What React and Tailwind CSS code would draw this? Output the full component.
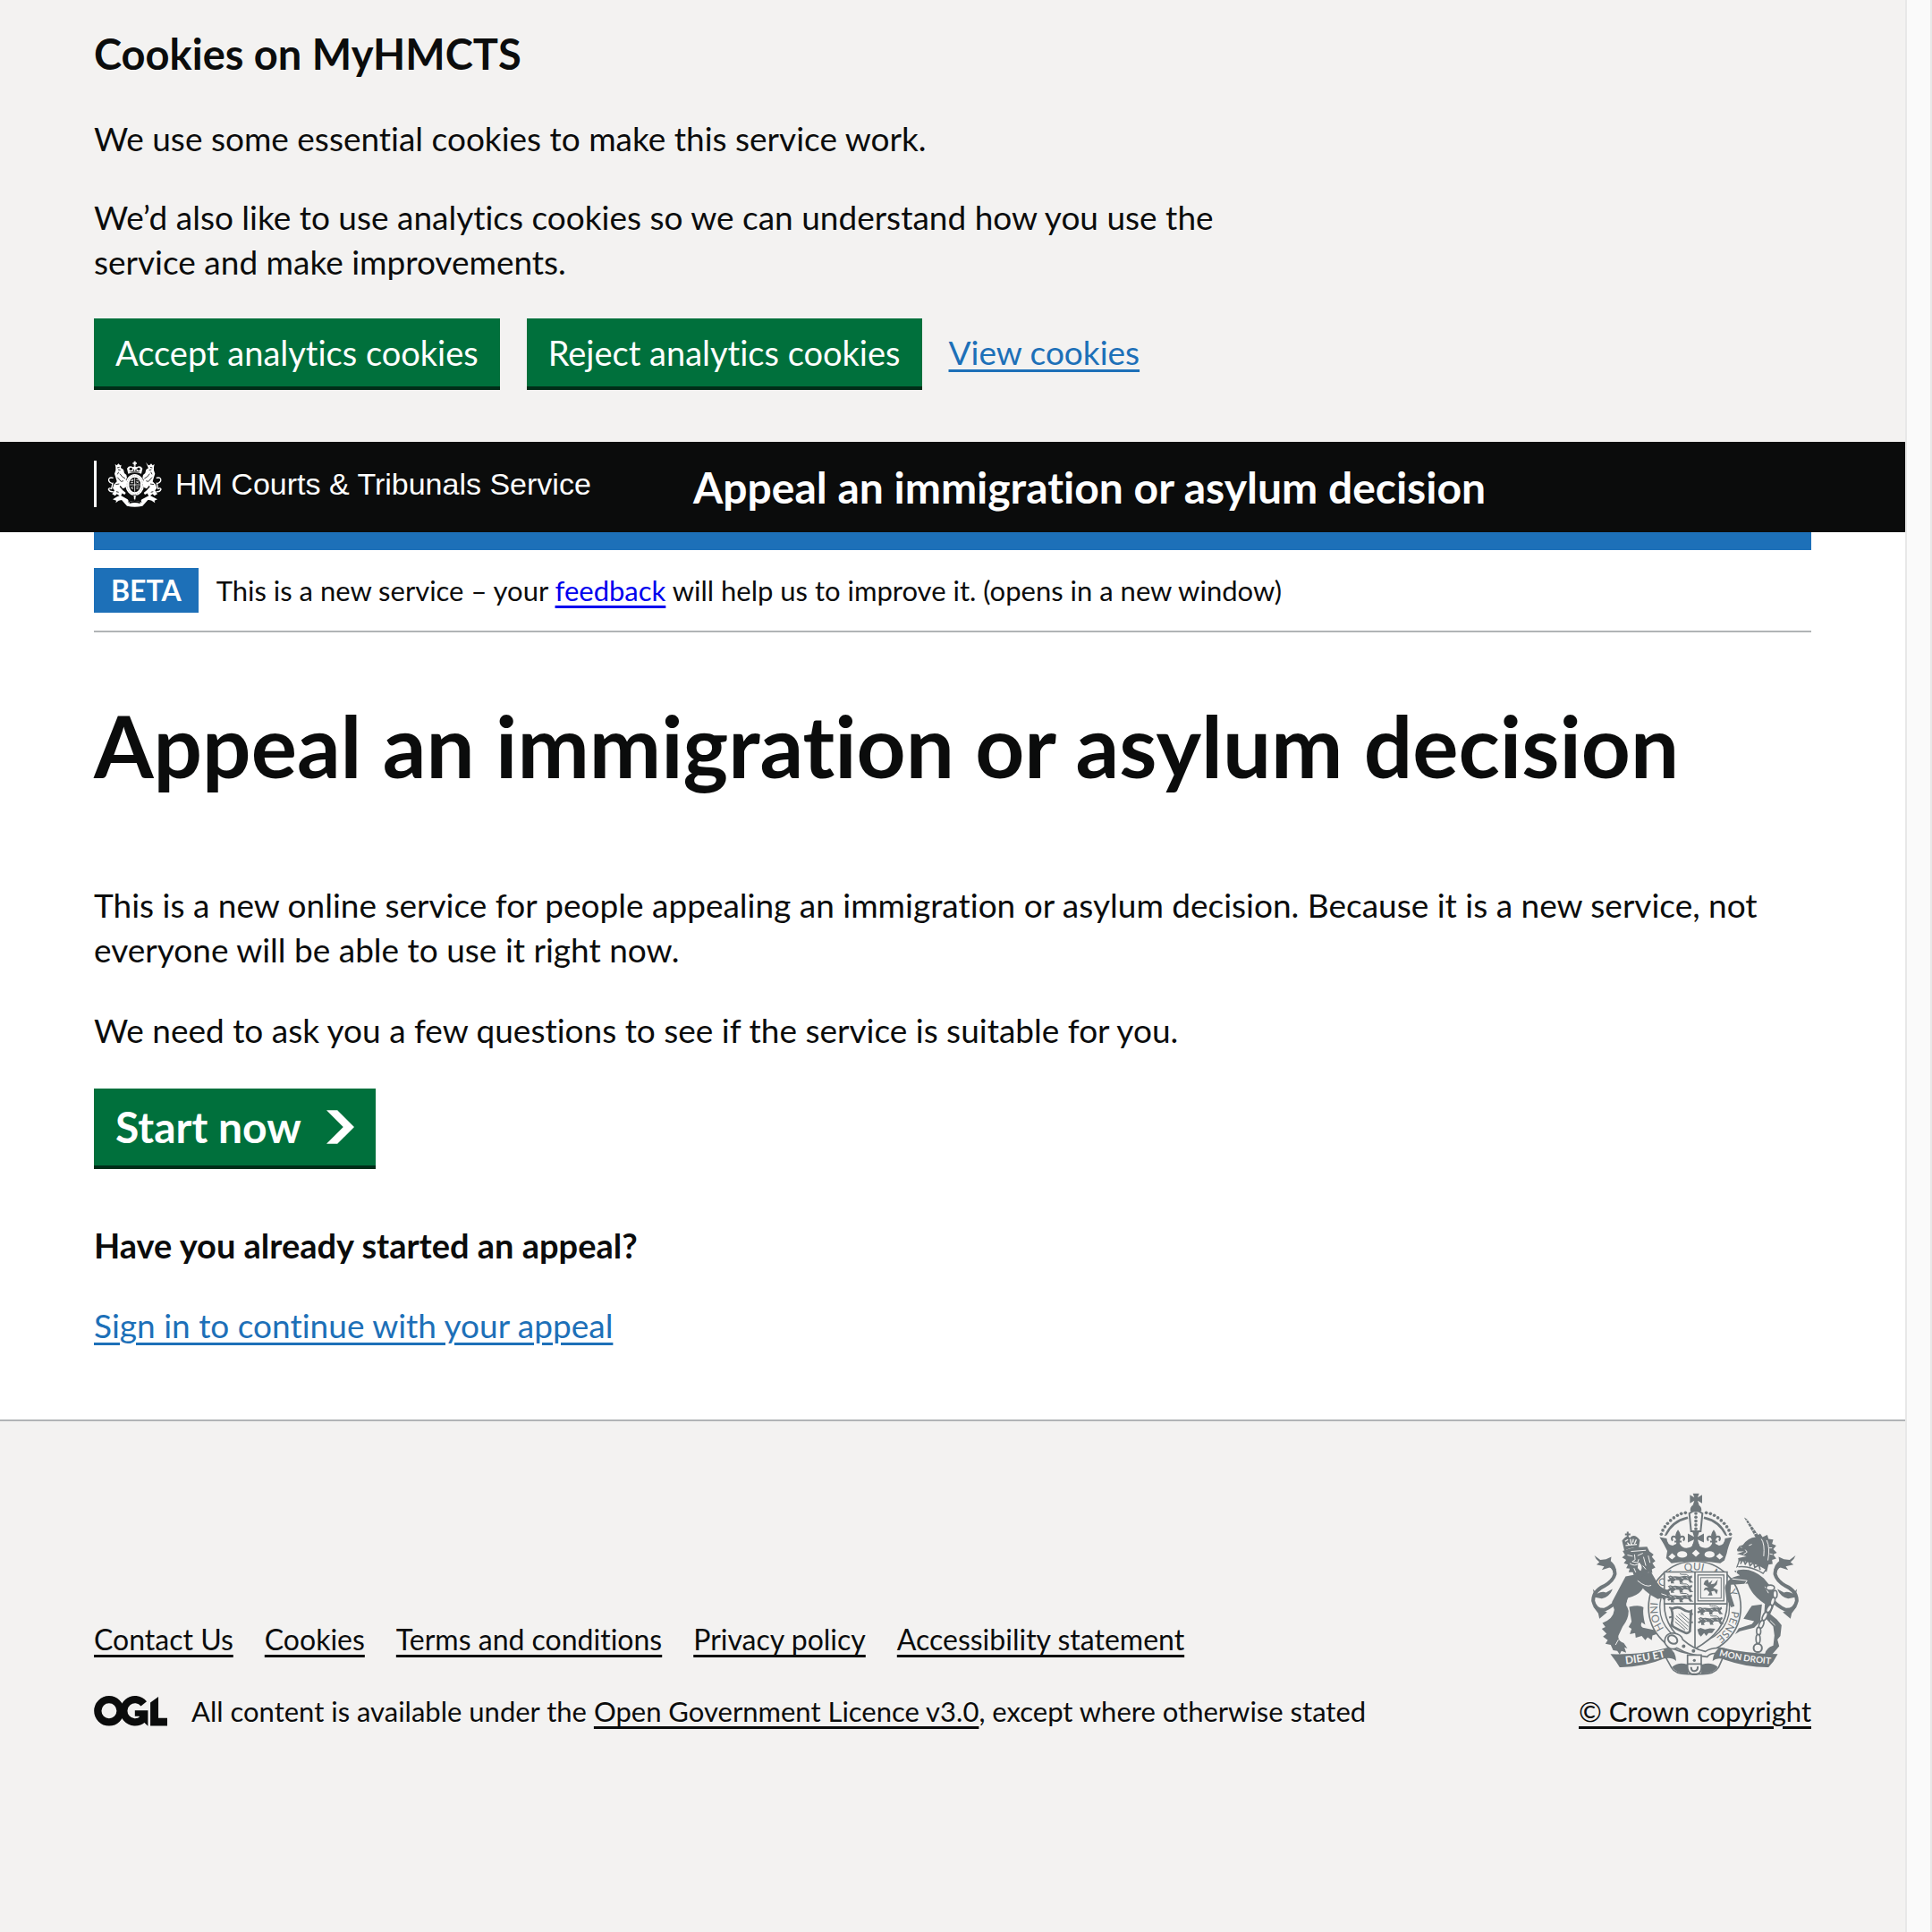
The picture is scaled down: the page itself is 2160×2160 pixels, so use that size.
const LINK = "underline underline-offset-[5px] decoration-[3px]";

function Button({ children }) {
  return (
    <button
      type="button"
      className="h-[76px] bg-[#00703c] px-6 text-[38px] leading-[38px] text-white shadow-[0_4px_0_#002d18]"
    >
      {children}
    </button>
  );
}

function HeaderCrest() {
  const beast = (
    <g>
      <path d="M86 40L92 44L97 38L103 44L107 42L105 52L114 58L117 70L124 76L126 86L122 92L127 108L121 118L112 122L104 112L98 118L104 132L110 138L104 148L92 140L86 146L76 140L84 128L78 120L82 108L92 98L88 84L84 72L88 60L88 50Z" />
      <path d="M80 86Q62 82 65 96Q70 106 78 104L74 122Q66 118 64 124Q68 134 80 132" fill="none" stroke="#fff" strokeWidth="4" />
      <path d="M88 118L98 112L112 128L122 136L118 142L106 136Z" />
      <g stroke="#0b0c0c" strokeWidth="2.5" fill="none">
        <path d="M93 52L101 50M96 58L104 60M102 72L110 82L120 88M94 84L106 98L114 96M88 108L100 106M98 66L94 74M90 132L98 134" />
      </g>
    </g>
  );
  return (
    <svg viewBox="60 28 186 156" className="h-[52px] w-[62px]" fill="#fff" aria-hidden="true">
      {beast}
      <g transform="matrix(-1 0 0 1 304 0)">{beast}</g>
      <path d="M189 33L204 52L199 56Z" />
      <path d="M149 30H155V35H159V39H155V45H149V39H145V35H149Z" />
      <path d="M130 72L126 54Q134 42 146 50L152 46L158 50Q170 42 178 54L174 72Q152 64 130 72Z" />
      <g fill="#0b0c0c">
        <circle cx="139" cy="56" r="5" />
        <circle cx="165" cy="56" r="5" />
        <path d="M147 55L151 62L146 64ZM157 55L153 62L158 64Z" />
        <path d="M134 66Q152 60 170 66V68Q152 63 134 68Z" />
      </g>
      <ellipse cx="152" cy="109" rx="31" ry="36" />
      <ellipse cx="152" cy="109" rx="19" ry="25" fill="#0b0c0c" />
      <path d="M152 86V132M134 109H170M138 96H147M138 102H147M157 98L166 104M157 104L165 96M138 116L147 124M141 122L147 114M157 116H166M157 122H164M157 92H165M141 92H148" stroke="#fff" strokeWidth="2.5" />
      <ellipse cx="152" cy="109" rx="26" ry="31" fill="none" stroke="#0b0c0c" strokeWidth="1.5" strokeDasharray="2 5" />
      <path d="M78 158Q92 148 104 144L128 158Q134 164 128 168Q150 160 176 168Q170 162 176 158L202 144Q214 150 228 158L218 162L220 170Q206 158 196 160L178 180Q152 186 126 180L108 160Q98 160 88 170L90 162Z" />
      <path d="M134 166Q152 160 170 166V172Q152 166 134 172Z" fill="#0b0c0c" />
      <path d="M147 144H157L155 156L152 162L149 156Z" stroke="#0b0c0c" strokeWidth="2" />
    </svg>
  );
}

const BEADS = [
  [433, 122], [419, 125], [406, 131], [394, 139], [383, 148], [373, 158], [364, 169], [357, 181], [352, 194],
];

function HalfCrown() {
  return (
    <g>
      {BEADS.map(([x, y]) => (
        <circle key={x} cx={x} cy={y} r="5.5" />
      ))}
      <path d="M440 135Q384 146 362 200L370 198Q392 154 442 142Z" />
      <path d="M408 179Q423 198 413 213L414 229H402L403 213Q393 198 408 179Z" />
      <path d="M405 216Q402 198 390 202Q384 208 390 216M411 216Q414 198 426 202Q432 208 426 216M396 219H420" fill="none" stroke="#6f777b" strokeWidth="6" />
    </g>
  );
}

function WalkingLion({ x, y }) {
  return (
    <g transform={`translate(${x} ${y})`}>
      <path d="M2 5L10 1L18 4L26 3L42 5L58 2L74 4L82 0L84 6L78 12L82 20L88 24L76 25L70 16L56 15L50 21L54 26L42 26L40 17L28 16L20 22L24 27L12 27L12 19L4 22L0 17L8 12Z" />
      <path d="M74 4Q64 -6 54 -3Q48 -2 42 -5" fill="none" stroke="#6f777b" strokeWidth="3" />
      <path d="M8 6L14 8M22 8L30 12M46 8L54 11M64 7L70 11" stroke="#f3f2f1" strokeWidth="2" />
    </g>
  );
}

function Tail() {
  return (
    <g>
      <path d="M156 292Q196 296 196 328Q190 352 160 368Q122 386 123 418Q130 450 160 448Q190 436 218 402" fill="none" stroke="#6f777b" strokeWidth="12" />
      <path d="M127 265L147 280L166 278L184 270L182 284Q196 294 201 316L178 306L152 314L160 302L134 296L144 288Q132 280 127 265Z" />
      <path d="M122 378L136 394Q154 384 166 390L188 378Q180 404 152 410L128 406Z" />
      <path d="M122 436L146 448L170 456L144 478L140 460Z" />
    </g>
  );
}

function RoyalArms() {
  const bg = "#f3f2f1";
  const ink = "#6f777b";
  return (
    <svg viewBox="117 55 696 613" className="h-[204px] w-[232px]" fill={ink} aria-hidden="true">
      <defs>
        <path id="garter" d="M365 516A125 125 0 1 1 480 564" />
        <path id="mottoLeft" d="M232 630Q310 622 374 604" />
        <path id="mottoRight" d="M546 602Q620 622 716 630" />
      </defs>

      <path d="M458 57H479L474 71L489 62V90L474 81L479 96H458L463 81L448 90V62L463 71Z" />
      <path d="M468 92Q488 98 487 114L480 122H456L449 114Q448 98 468 92Z" />
      <path d="M446 124Q468 106 490 124L484 184H452Z" fill={bg} stroke={ink} strokeWidth="6" />
      {[124, 137, 150, 163, 176].map((y) => (
        <circle key={y} cx="468" cy={y} r="5.5" />
      ))}
      <HalfCrown />
      <g transform="matrix(-1 0 0 1 936 0)">
        <HalfCrown />
      </g>
      <path d="M456 184H480L474 203L495 192V222L474 212L480 234H456L462 212L441 222V192L462 203Z" />

      <Tail />
      <g transform="matrix(-1 0 0 1 930 0)">
        <Tail />
      </g>

      <circle cx="464" cy="440" r="155" fill={bg} stroke={ink} strokeWidth="5" />
      <circle cx="464" cy="440" r="117" fill="none" stroke={ink} strokeWidth="4" />
      <g fontFamily="Lato, sans-serif" fontSize="35" fontWeight="400">
        <text><textPath href="#garter" startOffset="6">HONI</textPath></text>
        <text><textPath href="#garter" startOffset="132">SOIT</textPath></text>
        <text><textPath href="#garter" startOffset="244">QUI</textPath></text>
        <text><textPath href="#garter" startOffset="336">MAL Y</textPath></text>
        <text><textPath href="#garter" startOffset="486">PENSE</textPath></text>
      </g>
      <path d="M346 204L370 208Q372 230 390 232L402 226H414Q422 242 440 240Q456 238 458 226H478Q480 238 496 240Q514 242 522 226H534L546 232Q564 230 566 208L590 204Q576 236 572 258L564 282L550 292Q468 276 386 292L368 274L372 250Q360 226 346 204Z" />
      <g fill={bg}>
        <ellipse cx="422" cy="262" rx="17" ry="11" />
        <ellipse cx="514" cy="262" rx="17" ry="11" />
        <path d="M468 246L481 258L468 270L455 258ZM388 258L400 268L388 279L376 270ZM548 258L560 270L548 279L536 268Z" />
      </g>

      <path d="M362 321H573V430Q572 520 464 580Q362 520 362 430Z" fill={bg} stroke={ink} strokeWidth="5" />
      <path d="M465 321V580M362 428H573" stroke={ink} strokeWidth="5" />
      <WalkingLion x={372} y={332} />
      <WalkingLion x={372} y={364} />
      <WalkingLion x={372} y={396} />
      <WalkingLion x={472} y={438} />
      <WalkingLion x={474} y={472} />
      <g transform="translate(470 508) scale(.75 1)">
        <path d="M4 6L18 1L38 6L60 2L84 4L70 18L54 18L44 28L34 18L20 30L10 22Z" />
      </g>
      <rect x="475" y="331" width="87" height="87" fill="none" stroke={ink} strokeWidth="4" />
      <rect x="484" y="340" width="69" height="69" fill="none" stroke={ink} strokeWidth="3" />
      <path d="M498 352L508 346L512 358L524 348L518 362L530 360L542 346L538 364L526 374L542 382L538 396L530 384L520 386L524 400L508 400L514 390L504 380L494 384L498 374L510 372L494 362Z" />
      <g fill="none" stroke={ink}>
        <path d="M386 446Q408 434 424 446T452 452L448 520Q440 530 430 524Q400 512 386 500Q394 470 386 446Z" strokeWidth="8" />
        <path d="M398 476L440 514M402 468L442 504M410 462L444 492M418 458L446 482M398 488L432 516" strokeWidth="3" />
        <path d="M392 444L378 440M392 470L378 474M392 496L380 504M446 462H458M446 490H458" strokeWidth="6" />
      </g>

      <path d="M364 560Q360 528 392 526Q420 530 424 548Q460 580 500 588Q528 570 568 580L552 598Q520 588 506 606Q446 602 404 576Q380 588 364 560Z" fill={bg} stroke={ink} strokeWidth="5" />
      <ellipse cx="390" cy="548" rx="17" ry="13" transform="rotate(35 390 548)" fill="none" stroke={ink} strokeWidth="6" />
      <circle cx="427" cy="570" r="6" />
      <circle cx="460" cy="586" r="6" />
      <path d="M440 600H486V630H440Z" fill={bg} stroke={ink} strokeWidth="5" />
      <circle cx="463" cy="618" r="5" />

      <path d="M366 606L386 642Q398 664 440 664H490Q530 664 544 642L560 606" fill="none" stroke={ink} strokeWidth="5" />
      <path d="M388 640Q410 622 440 632L442 662Q404 664 388 640ZM542 640Q520 622 488 632L486 662Q526 664 542 640Z" />
      <path d="M440 630Q436 664 463 666Q492 664 486 630M452 640Q452 654 463 654Q476 652 474 638" fill="none" stroke={ink} strokeWidth="6" />
      <path d="M181 597Q290 600 376 574Q400 586 402 620Q386 606 362 612Q290 642 212 641L200 622Z" />
      <path d="M743 597Q640 596 550 574Q528 586 524 620Q540 606 566 616Q640 642 712 641L728 622Z" />
      <g fill={bg} fontFamily="Lato, sans-serif" fontWeight="700">
        <text fontSize="36">
          <textPath href="#mottoLeft">DIEU ET</textPath>
        </text>
        <text fontSize="30">
          <textPath href="#mottoRight">MON DROIT</textPath>
        </text>
      </g>

      <path d="M232 336L282 326L318 322L338 356Q352 378 376 382L382 396L376 400L382 412L368 408L362 418L354 408L340 412Q308 396 290 376Q276 400 240 408L234 428L242 452Q242 480 222 504L208 534Q204 552 226 560L238 578L228 574L234 592L218 586L212 598L204 586L190 584L182 566L164 562L172 550L156 538L168 528L152 512L164 506L154 492Q190 480 194 448L186 422Z" />
      <path d="M244 438Q280 430 292 440Q288 462 298 498L286 490Q280 504 290 508L330 516L336 530L322 534L320 550L306 540L298 550L286 536L266 542L264 526L246 530L252 512L242 506L252 488Z" />
      <path d="M222 250L240 244L262 238L304 236L312 252L326 262L320 270L332 284L322 292L332 306L320 312L322 324L308 322L302 336L290 330L284 346L272 334L262 338L256 322L242 322L246 310L234 308L240 296L226 292L234 280L220 272L230 264Z" />
      <g fill="none" stroke={bg} strokeWidth="3">
        <path d="M238 264L256 268M272 266L290 258M262 262L264 280L254 286L272 290L276 278M246 292Q262 304 280 292M292 270L300 300M308 266L314 290M250 252L300 248M300 312L290 300M266 322L260 308M240 414L236 436M272 350Q300 374 318 366M352 394L370 400M208 548L198 566" />
        <path d="M276 290Q290 300 282 316L274 308Z" fill={bg} />
      </g>
      <path d="M228 250L220 216Q236 194 246 206Q262 190 280 214L276 240Q250 236 228 250Z" />
      <path d="M236 186H242V192H248V198H242V206H236V198H230V192H236Z" />
      <path d="M230 218L240 212M248 210L252 232M268 212L262 226M232 232L270 228M238 222L244 230M258 210L256 222" stroke={bg} strokeWidth="4" />

      <path d="M630 138L640 144L680 200L668 204Z" />
      <path d="M634 150L642 146M641 160L649 156M648 171L657 167M656 183L665 178M663 194L672 190" stroke={bg} strokeWidth="3" />
      <path d="M606 246L614 234L626 230Q644 206 668 204L684 192L692 204L708 196L712 210L728 212L724 226L738 232L728 244L740 256L728 262L738 276L724 280L726 294L712 296L706 320L690 318Q640 296 612 290L610 274L638 268L606 260L630 252L608 252Z" />
      <path d="M646 232L656 228M688 210Q700 226 696 268M706 214Q718 240 710 282M628 262L640 254L634 246M618 236L622 240M724 240L714 240M726 262L716 260" fill="none" stroke={bg} strokeWidth="3" />
      <path d="M614 282Q660 282 704 312L694 326Q650 298 606 304Z" fill={bg} stroke={ink} strokeWidth="4" />
      <path d="M618 294L626 276L634 294L644 280L650 300L662 288L666 306L680 298L684 314" fill="none" stroke={ink} strokeWidth="5" />
      <path d="M596 318Q650 300 696 342L728 380Q738 410 728 440L718 462L740 480L756 500L752 536L742 548L748 570L726 596H700Q704 576 728 568L732 534L728 504L706 480L698 454L700 428Q656 400 642 360L586 364L584 392L598 436L586 440L570 408L566 374Q568 342 616 332Z" />
      <path d="M656 434L690 430L684 488L664 508L616 520L600 530L612 510L656 496L664 486L628 478L648 446Z" />
      <path d="M590 344L640 350L632 362M596 318L610 304L600 334M700 370L712 392M734 500L718 484" fill="none" stroke={bg} strokeWidth="3" />
      <g fill={bg} stroke={ink} strokeWidth="5">
        <ellipse cx="718" cy="374" rx="14" ry="9" />
        <ellipse cx="734" cy="396" rx="7" ry="13" />
        <ellipse cx="726" cy="420" rx="7" ry="14" transform="rotate(15 726 420)" />
        <ellipse cx="714" cy="444" rx="7" ry="14" transform="rotate(28 714 444)" />
        <ellipse cx="700" cy="470" rx="7" ry="15" transform="rotate(26 700 470)" />
        <ellipse cx="688" cy="497" rx="7" ry="14" transform="rotate(22 688 497)" />
        <ellipse cx="679" cy="520" rx="7" ry="13" />
        <ellipse cx="677" cy="546" rx="7" ry="15" />
      </g>
      <circle cx="676" cy="576" r="14" fill={bg} stroke={ink} strokeWidth="6" />
    </svg>
  );
}

function OglLogo() {
  return (
    <svg viewBox="14 24 247 101" className="h-[34px] w-[82px] shrink-0" fill="none" stroke="#0b0c0c" role="img" aria-label="OGL">
      <circle cx="65" cy="74" r="38" strokeWidth="25" />
      <path d="M182 50A38 38 0 1 0 178 102" strokeWidth="25" />
      <path d="M152 72H196V125L176 106L166 92H152Z" fill="#0b0c0c" stroke="none" />
      <path d="M204 46L231 26V98H261V124H204Z" fill="#0b0c0c" stroke="none" />
    </svg>
  );
}

const FOOTER_LINKS = ["Contact Us", "Cookies", "Terms and conditions", "Privacy policy", "Accessibility statement"];

function Container({ children, className = "" }) {
  return <div className={`mx-auto max-w-[1920px] ${className}`}>{children}</div>;
}

export default function App() {
  return (
    <div className="flex min-h-screen bg-[#f3f2f1] font-[Lato,sans-serif] text-[37px] leading-[50px] text-[#0b0c0c] [font-variant-ligatures:none]">
      <div className="flex min-w-0 flex-1 flex-col">
        <section aria-label="Cookies on MyHMCTS" className="px-8 pt-[30px] pb-[62px]">
          <Container>
            <div className="max-w-[1280px]">
              <h2 className="mb-10 text-[47px] leading-[60px] font-bold">Cookies on MyHMCTS</h2>
              <p className="mb-[38px]">We use some essential cookies to make this service work.</p>
              <p className="mb-[38px]">
                We’d also like to use analytics cookies so we can understand how you use the service and make improvements.
              </p>
            </div>
            <div className="flex flex-wrap items-center gap-x-[30px] gap-y-4">
              <Button>Accept analytics cookies</Button>
              <Button>Reject analytics cookies</Button>
              <a href="#cookies" className={`text-[#1d70b8] ${LINK}`}>View cookies</a>
            </div>
          </Container>
        </section>

        <header className="bg-[#0b0c0c] px-8 text-white">
          <Container className="flex h-[101px] items-center">
            <a href="#home" className="mb-2 flex w-[670px] shrink-0 items-center font-['Liberation_Sans',sans-serif] text-[34px] leading-[52px]">
              <span className="mr-3 h-[52px] w-[3px] bg-white" />
              <HeaderCrest />
              <span className="ml-[14px]">HM Courts &amp; Tribunals Service</span>
            </a>
            <a href="#service" className="text-[48px] leading-[60px] font-bold">Appeal an immigration or asylum decision</a>
          </Container>
        </header>

        <main className="bg-white px-8 pb-[80px]">
          <Container>
            <div className="h-5 bg-[#1d70b8]" />
            <div className="flex items-center gap-5 border-b-2 border-[#b1b4b6] py-5 text-[31px]">
              <strong className="bg-[#1d70b8] px-[19px] text-[32px] leading-[50px] text-white">BETA</strong>
              <span>
                This is a new service – your <a href="#feedback" className={`text-[#0000ee] ${LINK}`}>feedback</a> will help us to improve it. (opens in a new window)
              </span>
            </div>
            <h1 className="mt-[76px] mb-[104px] text-[96px] leading-[100px] font-bold">Appeal an immigration or asylum decision</h1>
            <p className="mb-10">
              This is a new online service for people appealing an immigration or asylum decision. Because it is a new service, not everyone will be able to use it right now.
            </p>
            <p className="mb-10">We need to ask you a few questions to see if the service is suitable for you.</p>
            <button
              type="button"
              className="flex h-[86px] items-center gap-7 bg-[#00703c] px-6 text-[48px] leading-[48px] font-bold text-white shadow-[0_4px_0_#002d18]"
            >
              Start now
              <svg viewBox="0 0 33 40" className="h-[38px] w-[31px]" fill="currentColor" aria-hidden="true">
                <path d="M0 0h13l20 20-20 20H0l20-20z" />
              </svg>
            </button>
            <h2 className="mt-16 mb-10 text-[38px] leading-[50px] font-bold">Have you already started an appeal?</h2>
            <a href="#sign-in" className={`text-[#1d70b8] ${LINK}`}>Sign in to continue with your appeal</a>
          </Container>
        </main>

        <footer className="border-t-2 border-[#b1b4b6] px-8 pt-[80px] pb-10 text-[31px] leading-[40px]">
          <Container className="flex items-end justify-between gap-10">
            <div>
              <nav className="mb-10 flex flex-wrap gap-x-[35px] gap-y-2 text-[32px]">
                {FOOTER_LINKS.map((label) => (
                  <a key={label} href="#footer" className={LINK}>{label}</a>
                ))}
              </nav>
              <div className="flex items-center gap-[27px]">
                <OglLogo />
                <p>
                  All content is available under the <a href="#licence" className={LINK}>Open Government Licence v3.0</a>, except where otherwise stated
                </p>
              </div>
            </div>
            <a href="#copyright" className={`flex shrink-0 flex-col items-end gap-5 ${LINK}`}>
              <span className="mr-[14px]"><RoyalArms /></span>
              © Crown copyright
            </a>
          </Container>
        </footer>
      </div>
      <div className="w-[30px] shrink-0 border-x-2 border-[#e8e8e8] bg-[#fafafa]" />
    </div>
  );
}
